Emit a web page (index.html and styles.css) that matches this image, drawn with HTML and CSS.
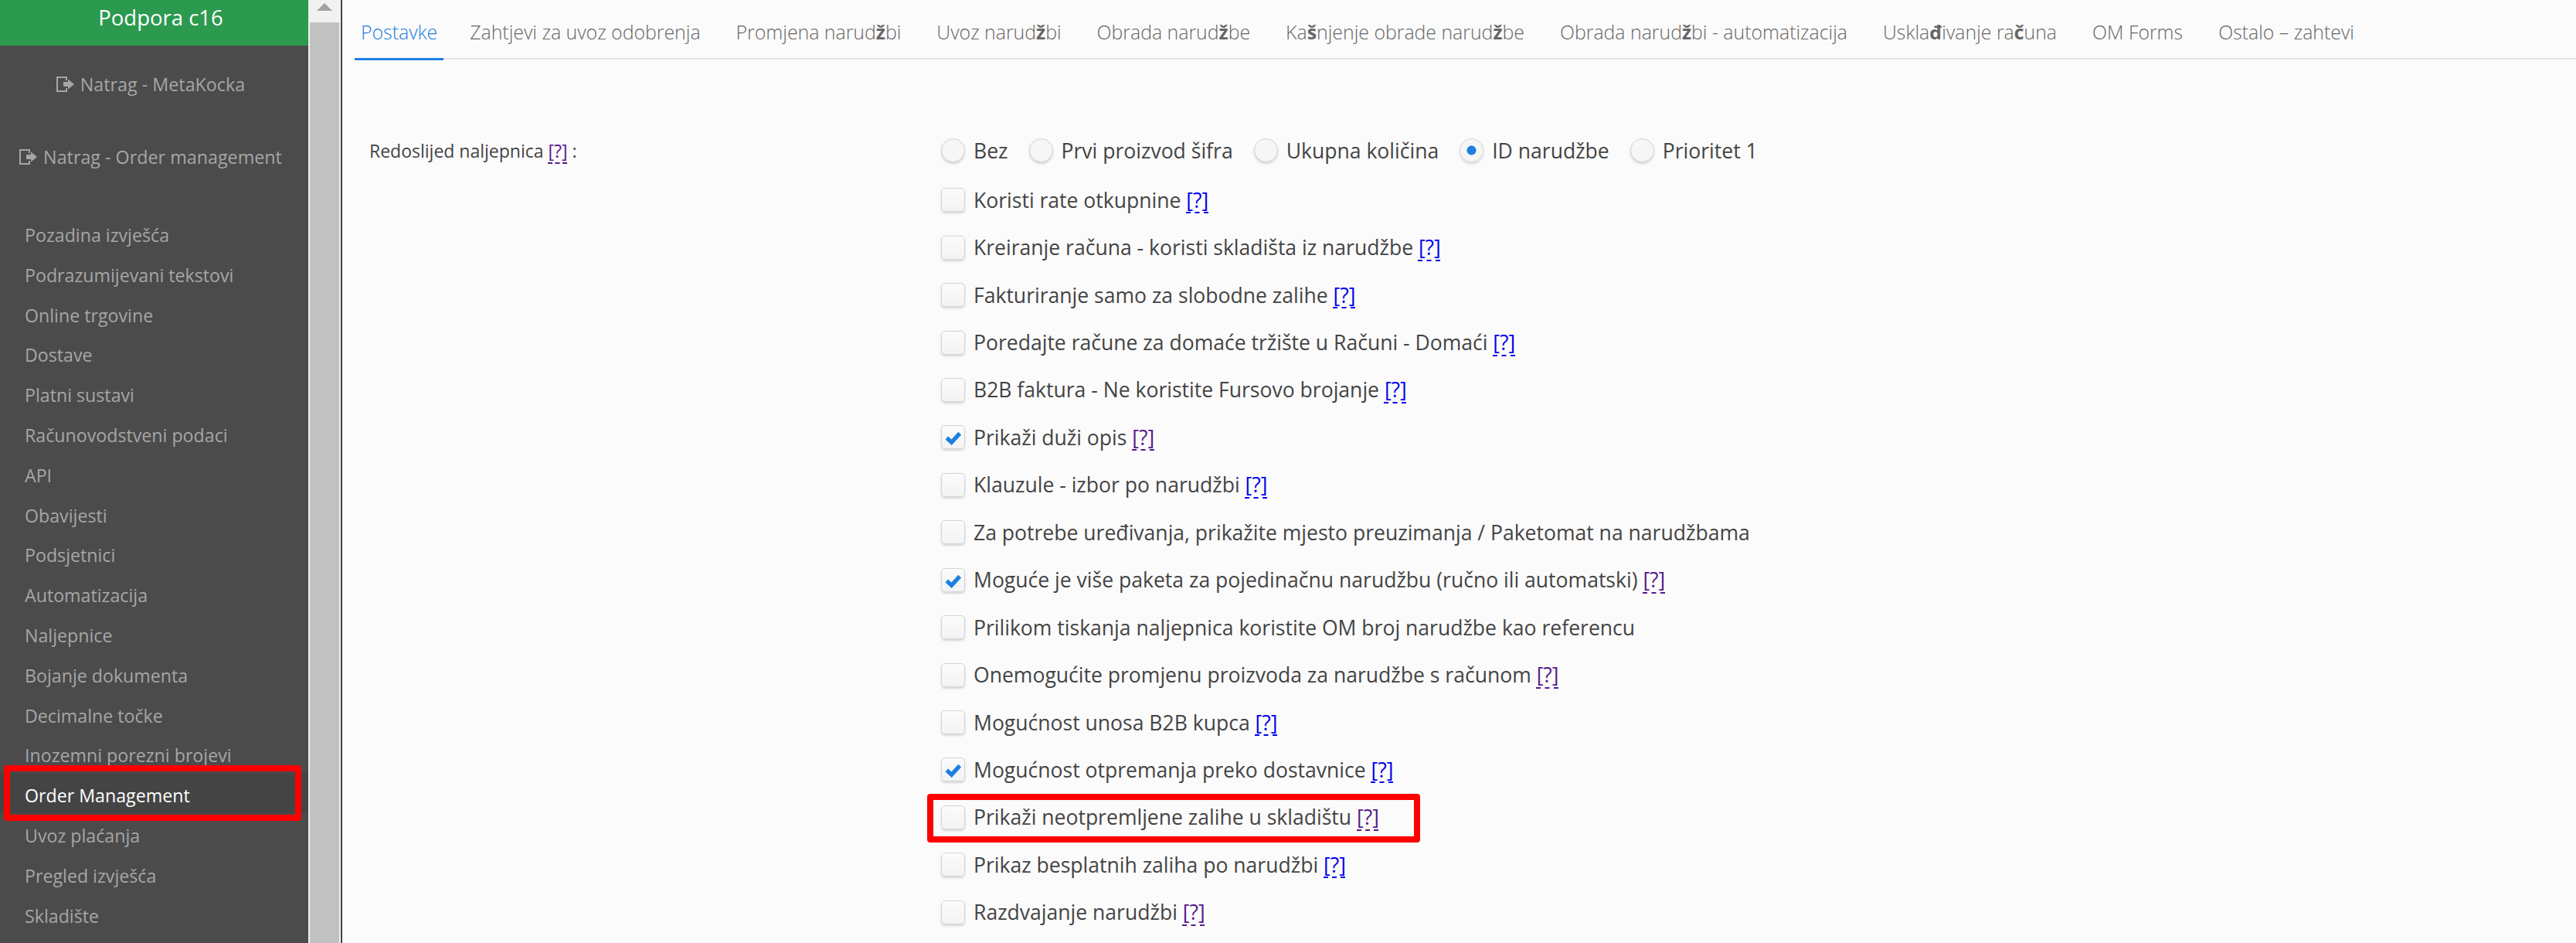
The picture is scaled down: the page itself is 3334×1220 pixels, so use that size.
FILE: index.html
```html
<!DOCTYPE html>
<html lang="hr">
<head>
    <meta charset="UTF-8">
    <title>Order Management</title>
    <link rel="stylesheet" href="styles.css">
</head>
<body>
    <div class="sidebar">
        <div class="brand">Podpora c16</div>
        <a class="back-link back-first"><svg class="back-icon" viewBox="0 0 24 20"><path class="door" d="M13 5V1H1v18h12v-4"/><path d="M9 7h6V3.500l8 6.500-8 6.500V13H9z"/></svg>Natrag - MetaKocka</a>
        <a class="back-link back-second"><svg class="back-icon" viewBox="0 0 24 20"><path class="door" d="M13 5V1H1v18h12v-4"/><path d="M9 7h6V3.500l8 6.500-8 6.500V13H9z"/></svg>Natrag - Order management</a>
        <ul class="menu">
            <li>Pozadina izvješća</li>
            <li>Podrazumijevani tekstovi</li>
            <li>Online trgovine</li>
            <li>Dostave</li>
            <li>Platni sustavi</li>
            <li>Računovodstveni podaci</li>
            <li>API</li>
            <li>Obavijesti</li>
            <li>Podsjetnici</li>
            <li>Automatizacija</li>
            <li>Naljepnice</li>
            <li>Bojanje dokumenta</li>
            <li>Decimalne točke</li>
            <li>Inozemni porezni brojevi</li>
            <li class="active">Order Management<span class="mark"></span></li>
            <li>Uvoz plaćanja</li>
            <li>Pregled izvješća</li>
            <li>Skladište</li>
        </ul>
    </div>
    <div class="scrollbar">
        <div class="scroll-up"></div>
        <div class="scroll-thumb"></div>
    </div>
    <div class="content">
        <div class="tabs">
            <a class="tab selected">Postavke</a>
            <a class="tab">Zahtjevi za uvoz odobrenja</a>
            <a class="tab">Promjena narud<b>ž</b>bi</a>
            <a class="tab">Uvoz narud<b>ž</b>bi</a>
            <a class="tab">Obrada narud<b>ž</b>be</a>
            <a class="tab">Ka<b>š</b>njenje obrade narud<b>ž</b>be</a>
            <a class="tab">Obrada narud<b>ž</b>bi - automatizacija</a>
            <a class="tab">Uskla<b>đ</b>ivanje ra<b>č</b>una</a>
            <a class="tab">OM Forms</a>
            <a class="tab">Ostalo – zahtevi</a>
        </div>
        <div class="form">
            <div class="form-label">Redoslijed naljepnica <a class="help seen">[?]</a> :</div>
            <div class="form-fields">
                <div class="radios">
                    <label class="radio-item"><span class="radio"></span>Bez</label>
                    <label class="radio-item"><span class="radio"></span>Prvi proizvod šifra</label>
                    <label class="radio-item"><span class="radio"></span>Ukupna količina</label>
                    <label class="radio-item"><span class="radio on"></span>ID narudžbe</label>
                    <label class="radio-item"><span class="radio"></span>Prioritet 1</label>
                </div>
                <div class="row"><span class="check"></span>Koristi rate otkupnine <a class="help">[?]</a></div>
                <div class="row"><span class="check"></span>Kreiranje računa - koristi skladišta iz narudžbe <a class="help">[?]</a></div>
                <div class="row"><span class="check"></span>Fakturiranje samo za slobodne zalihe <a class="help">[?]</a></div>
                <div class="row"><span class="check"></span>Poredajte račune za domaće tržište u Računi - Domaći <a class="help">[?]</a></div>
                <div class="row"><span class="check"></span>B2B faktura - Ne koristite Fursovo brojanje <a class="help">[?]</a></div>
                <div class="row"><span class="check"><svg viewBox="0 0 30 30"><path d="M6.500 16l6.500 6 11-12"/></svg></span>Prikaži duži opis <a class="help seen">[?]</a></div>
                <div class="row"><span class="check"></span>Klauzule - izbor po narudžbi <a class="help">[?]</a></div>
                <div class="row"><span class="check"></span>Za potrebe uređivanja, prikažite mjesto preuzimanja / Paketomat na narudžbama</div>
                <div class="row"><span class="check"><svg viewBox="0 0 30 30"><path d="M6.500 16l6.500 6 11-12"/></svg></span>Moguće je više paketa za pojedinačnu narudžbu (ručno ili automatski) <a class="help seen">[?]</a></div>
                <div class="row"><span class="check"></span>Prilikom tiskanja naljepnica koristite OM broj narudžbe kao referencu</div>
                <div class="row"><span class="check"></span>Onemogućite promjenu proizvoda za narudžbe s računom <a class="help seen">[?]</a></div>
                <div class="row"><span class="check"></span>Mogućnost unosa B2B kupca <a class="help">[?]</a></div>
                <div class="row"><span class="check"><svg viewBox="0 0 30 30"><path d="M6.500 16l6.500 6 11-12"/></svg></span>Mogućnost otpremanja preko dostavnice <a class="help">[?]</a></div>
                <div class="row"><span class="check"></span>Prikaži neotpremljene zalihe u skladištu <a class="help seen">[?]</a><span class="mark"></span></div>
                <div class="row"><span class="check"></span>Prikaz besplatnih zaliha po narudžbi <a class="help">[?]</a></div>
                <div class="row"><span class="check"></span>Razdvajanje narudžbi <a class="help seen">[?]</a></div>
            </div>
        </div>
    </div>
</body>
</html>
```

FILE: styles.css
```css
html, body {
    height: 100%;
    margin: 0;
    overflow: hidden;
}
body {
    display: flex;
    font-family: "Open Sans", sans-serif;
    font-size: 26.55px;
    color: #444;
    background-color: #fbfbfb;
}
.sidebar {
    width: 399px;
    flex: none;
    background-color: #4b4b4b;
    color: #a6a6a6;
    font-size: 23.2px;
}
.brand {
    height: 59px;
    line-height: 46px;
    padding-left: 17px;
    box-sizing: border-box;
    text-align: center;
    font-size: 27.5px;
    color: white;
    background-color: #2b9a4f;
}
.back-link {
    display: flex;
    justify-content: center;
    align-items: center;
    height: 52px;
    padding-right: 9px;
    font-size: 23.3px;
}
.back-first {
    margin-top: 24px;
}
.back-second {
    margin-top: 42px;
}
.back-icon {
    width: 24px;
    height: 20px;
    margin-right: 7px;
    fill: #a6a6a6;
}
.back-icon .door {
    fill: none;
    stroke: #a6a6a6;
    stroke-width: 2;
}
.menu {
    list-style: none;
    margin: 46px 0 0;
    padding: 0;
}
.menu li {
    position: relative;
    height: 51.8px;
    line-height: 58px;
    padding-left: 32px;
}
.menu li.active {
    background-color: #444;
    color: white;
}
.scrollbar {
    width: 42px;
    flex: none;
    background-color: #f1f1f1;
    border-right: 2px solid #444;
    box-sizing: content-box;
}
.scroll-up {
    width: 0;
    height: 0;
    margin: 4px auto 15px;
    border-left: 10px solid transparent;
    border-right: 10px solid transparent;
    border-bottom: 10px solid #a3a3a3;
}
.scroll-thumb {
    height: 1191px;
    margin: 0 2px;
    background-color: #c1c1c1;
}
.content {
    flex: 1;
    padding: 0 0 0 16px;
}
.tabs {
    display: flex;
    height: 75px;
    border-bottom: 2px solid #e4e4e4;
    font-size: 24.85px;
    font-weight: 300;
    color: #666;
}
.tab {
    padding: 24px 8px 0;
    margin-right: 30px;
    white-space: nowrap;
}
.tab b {
    font-weight: 700;
}
.tab.selected {
    color: #1e7fe0;
    height: 51px;
    margin-right: 26px;
    border-bottom: 3px solid #1e7fe0;
}
.form {
    display: flex;
    padding-top: 86px;
}
.form-label {
    width: 759px;
    padding-left: 19px;
    box-sizing: border-box;
    font-size: 23px;
    line-height: 64px;
}
.form-fields {
    flex: 1;
}
.radios {
    display: flex;
    height: 65px;
    align-items: center;
    margin-top: -1px;
    margin-bottom: 1px;
}
.radio-item {
    display: flex;
    align-items: center;
    margin-right: 27px;
}
.radio {
    width: 31px;
    height: 31px;
    margin-right: 11px;
    border: 1px solid #d5d5d5;
    border-radius: 50%;
    box-sizing: border-box;
    background-color: #f6f6f6;
    box-shadow: 0 2px 3px rgba(0, 0, 0, 0.15);
}
.radio.on {
    background: radial-gradient(circle, #1e7fe0 0 5.5px, #f6f6f6 6.5px);
}
.row {
    position: relative;
    display: flex;
    align-items: center;
    height: 61.45px;
    white-space: pre;
}
.check {
    width: 31px;
    height: 31px;
    margin-right: 11px;
    border: 1px solid #d5d5d5;
    border-radius: 5px;
    box-sizing: border-box;
    background: linear-gradient(#fbfbfb, #f3f3f3);
    box-shadow: 0 2px 3px rgba(0, 0, 0, 0.15);
}
.check svg {
    display: block;
    width: 100%;
    height: 100%;
    fill: none;
    stroke: #1e7fe0;
    stroke-width: 5.5;
}
.help {
    color: #0000ee;
    text-decoration: underline dashed 2px;
    text-underline-offset: 6px;
}
.help.seen {
    color: #551a8b;
}
.mark {
    position: absolute;
    border: 8px solid #ff0000;
    border-radius: 4px;
}
.menu .mark {
    left: 5px;
    top: -10px;
    width: 369px;
    height: 56px;
}
.row .mark {
    left: -18px;
    top: 0;
    width: 622px;
    height: 47px;
}
```
